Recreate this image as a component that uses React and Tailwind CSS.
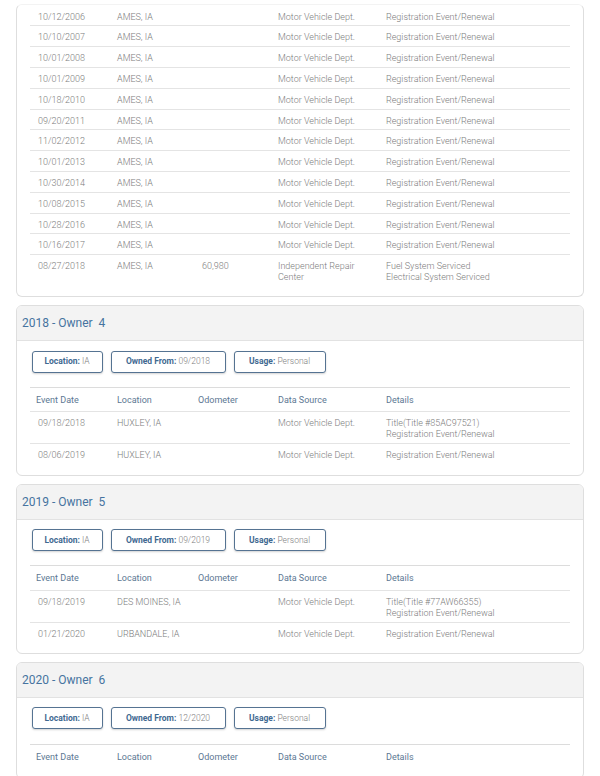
const font = { fontFamily: 'Roboto, "Liberation Sans", sans-serif' };

const history = [
  ['10/12/2006', 'AMES, IA', '', 'Motor Vehicle Dept.', 'Registration Event/Renewal'],
  ['10/10/2007', 'AMES, IA', '', 'Motor Vehicle Dept.', 'Registration Event/Renewal'],
  ['10/01/2008', 'AMES, IA', '', 'Motor Vehicle Dept.', 'Registration Event/Renewal'],
  ['10/01/2009', 'AMES, IA', '', 'Motor Vehicle Dept.', 'Registration Event/Renewal'],
  ['10/18/2010', 'AMES, IA', '', 'Motor Vehicle Dept.', 'Registration Event/Renewal'],
  ['09/20/2011', 'AMES, IA', '', 'Motor Vehicle Dept.', 'Registration Event/Renewal'],
  ['11/02/2012', 'AMES, IA', '', 'Motor Vehicle Dept.', 'Registration Event/Renewal'],
  ['10/01/2013', 'AMES, IA', '', 'Motor Vehicle Dept.', 'Registration Event/Renewal'],
  ['10/30/2014', 'AMES, IA', '', 'Motor Vehicle Dept.', 'Registration Event/Renewal'],
  ['10/08/2015', 'AMES, IA', '', 'Motor Vehicle Dept.', 'Registration Event/Renewal'],
  ['10/28/2016', 'AMES, IA', '', 'Motor Vehicle Dept.', 'Registration Event/Renewal'],
  ['10/16/2017', 'AMES, IA', '', 'Motor Vehicle Dept.', 'Registration Event/Renewal'],
  ['08/27/2018', 'AMES, IA', '60,980', ['Independent Repair', 'Center'], ['Fuel System Serviced', 'Electrical System Serviced']],
];

const owners = [
  {
    year: '2018',
    num: 4,
    from: '09/2018',
    rows: [
      ['09/18/2018', 'HUXLEY, IA', '', 'Motor Vehicle Dept.', ['Title(Title #85AC97521)', 'Registration Event/Renewal']],
      ['08/06/2019', 'HUXLEY, IA', '', 'Motor Vehicle Dept.', 'Registration Event/Renewal'],
    ],
  },
  {
    year: '2019',
    num: 5,
    from: '09/2019',
    rows: [
      ['09/18/2019', 'DES MOINES, IA', '', 'Motor Vehicle Dept.', ['Title(Title #77AW66355)', 'Registration Event/Renewal']],
      ['01/21/2020', 'URBANDALE, IA', '', 'Motor Vehicle Dept.', 'Registration Event/Renewal'],
    ],
  },
  {
    year: '2020',
    num: 6,
    from: '12/2020',
    rows: [],
  },
];

const cols = 'grid grid-cols-[81px_81px_80px_108px_1fr]';

function Cell({ value, className = '' }) {
  const lines = Array.isArray(value) ? value : [value];
  return (
    <div className={`pl-[6px] ${className}`}>
      {lines.map((l, i) => (
        <div key={i}>{l}</div>
      ))}
    </div>
  );
}

function Row({ row, first }) {
  return (
    <div
      className={`${cols} border-t ${first ? 'border-transparent' : 'border-[#e4e4e4]'} pt-[6px] pb-[2.8px] text-[9px] leading-[11px] font-light text-[#7c7c7c]`}
    >
      <Cell value={row[0]} className="pl-[8px]" />
      <Cell value={row[1]} />
      <Cell value={row[2]} className="pl-[10px]" />
      <Cell value={row[3]} />
      <Cell value={row[4]} />
    </div>
  );
}

function Badge({ label, value, w }) {
  return (
    <div className={`${w} h-[22px] flex items-center justify-center rounded-[3px] border-[1.5px] border-[#557392] bg-white shadow-[0_1px_2px_rgba(0,0,0,0.18)] text-[8.5px]`}>
      <span className="font-bold text-[#3f6991]">{label}</span>
      <span className="font-light text-[#808080]">&nbsp;{value}</span>
    </div>
  );
}

function OwnerCard({ owner }) {
  return (
    <div className="rounded-[6px] border border-[#dedede] bg-white overflow-hidden">
      <div className="h-[35px] flex items-center pl-[5px] bg-[#f3f3f3] border-b border-[#e2e2e2] text-[12px] text-[#4673a0]">
        {owner.year} - Owner{'\u00a0\u00a0'}{owner.num}
      </div>
      <div className="px-[13px] pt-[9.5px] pb-[10.5px]">
        <div className="flex gap-[8px] pl-[1.5px] mb-[14.3px]">
          <Badge label="Location:" value="IA" w="w-[71px]" />
          <Badge label="Owned From:" value={owner.from} w="w-[115px]" />
          <Badge label="Usage:" value="Personal" w="w-[92px]" />
        </div>
        <div className={`${cols} border-t border-[#dcdcdc] pt-[7px] pb-[5.4px] text-[9px] leading-[11px] text-[#5d7893]`}>
          <Cell value="Event Date" />
          <Cell value="Location" />
          <Cell value="Odometer" className="pl-[2px]" />
          <Cell value="Data Source" />
          <Cell value="Details" />
        </div>
        {owner.rows.map((r, i) => (
          <Row key={i} row={r} />
        ))}
      </div>
    </div>
  );
}

export default function App() {
  return (
    <div className="w-[600px] h-[776px] overflow-hidden bg-white" style={font}>
      <div className="flex flex-col gap-[8px] px-[16px]">
        {/* previous owner, continued from above */}
        <div className="mt-[3.7px] rounded-[6px] border border-[#dedede] border-t-[#f3f3f3] bg-white">
          <div className="px-[13px] pb-[10.2px]">
            {history.map((r, i) => (
              <Row key={i} row={r} first={i === 0} />
            ))}
          </div>
        </div>

        {owners.map((o) => (
          <OwnerCard key={o.year} owner={o} />
        ))}
      </div>
    </div>
  );
}
